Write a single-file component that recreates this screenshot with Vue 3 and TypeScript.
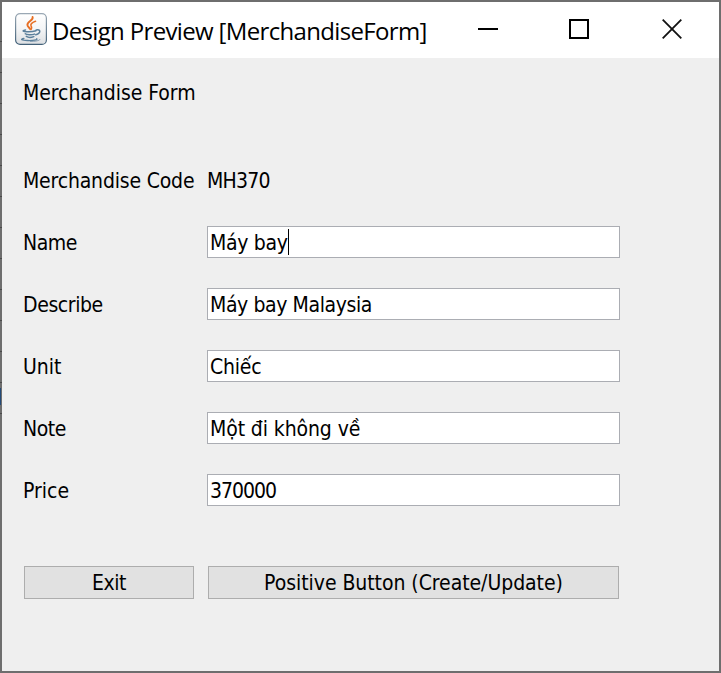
<script setup lang="ts">
import { ref } from 'vue'

interface Field {
  id: string
  label: string
  value: string
  /** Letter spacing of the label and the value, in pixels. */
  tracking: [number, number]
}

const fields = ref<Field[]>([
  { id: 'name', label: 'Name', value: 'Máy bay', tracking: [-0.45, -0.3] },
  { id: 'describe', label: 'Describe', value: 'Máy bay Malaysia', tracking: [-0.4, -0.4] },
  { id: 'unit', label: 'Unit', value: 'Chiếc', tracking: [0, -0.2] },
  { id: 'note', label: 'Note', value: 'Một đi không về', tracking: [-0.45, -0.1] },
  { id: 'price', label: 'Price', value: '370000', tracking: [0, -1] },
])
</script>

<template>
  <div class="window">
    <header class="titlebar">
      <svg class="java" width="32" height="32" viewBox="0 0 32 32">
        <defs>
          <linearGradient id="tile" x1="0" y1="0" x2="0" y2="1">
            <stop offset="0" stop-color="#fff" />
            <stop offset="0.5" stop-color="#f4f5f6" />
            <stop offset="1" stop-color="#dcdfe2" />
          </linearGradient>
          <linearGradient id="rim" x1="0" y1="0" x2="0" y2="1">
            <stop offset="0" stop-color="#9aa8b4" />
            <stop offset="1" stop-color="#426179" />
          </linearGradient>
        </defs>
        <rect x="0.6" y="0.6" width="30.8" height="30.8" rx="4.5" fill="url(#tile)" stroke="url(#rim)" stroke-width="1.2" />
        <g fill="none" stroke="#e76f24" stroke-linecap="round">
          <path d="M17.6 4c1.2 3.2-5.6 4.6-5.2 8 .2 1.8 2 2.6 2.8 4.2" stroke-width="1.9" />
          <path d="M20.5 8.3c-3 1.1-5.1 2.6-4.5 4.3.5 1.300 1.300 2 .1 3.700" stroke-width="1.6" />
        </g>
        <g fill="none" stroke="#5b7f9b" stroke-linecap="round" stroke-width="1.5">
          <path d="M10.500 17c-2.500.5-3.200 1-1.100 1.400 3.300.6 8.600.3 11.600-.6" />
          <path d="M10.300 20.700c1.200 1.200 6.500 1.200 9.200.4" />
          <path d="M11.300 23.400c1.600 1 5.400 1 7.500.2" />
          <path d="M21.200 17c4.500-1.200 5.200 3-.4 4.800" />
          <path d="M8.900 25.500c-4 .7-2.600 1.900 3.500 2 5.400.2 10.500-.4 9.300-1.700" stroke-width="1.3" />
          <path d="M15.500 28.400c4.600 0 8.500-.5 9.500-1.900" stroke-width="0.7" />
        </g>
      </svg>
      <h1 class="title">Design Preview [MerchandiseForm]</h1>
      <div class="controls">
        <svg width="20" height="20" viewBox="0 0 20 20"><path d="M0 10h20" stroke="#000" stroke-width="2" /></svg>
        <svg width="20" height="20" viewBox="0 0 20 20"><rect x="1" y="1" width="18" height="18" fill="none" stroke="#000" stroke-width="2" /></svg>
        <svg class="close" width="20" height="20" viewBox="0 0 20 20"><path d="M.7.7l18.600 18.600M19.300.7L.7 19.300" stroke="#111" stroke-width="1.8" /></svg>
      </div>
    </header>

    <main class="form">
      <div class="heading">Merchandise Form</div>
      <div class="row">
        <span class="label code">Merchandise Code</span>
        <span class="code-value">MH370</span>
      </div>
      <div v-for="f in fields" :key="f.id" class="row">
        <span class="label" :style="{ letterSpacing: f.tracking[0] + 'px' }">{{ f.label }}</span>
        <div class="input" :style="{ letterSpacing: f.tracking[1] + 'px' }">
          <span>{{ f.value }}</span><i v-if="f.id === 'name'" class="caret"></i>
        </div>
      </div>
      <div class="actions">
        <button class="exit">Exit</button>
        <button class="submit">Positive Button (Create/Update)</button>
      </div>
    </main>
  </div>
</template>

<style>
body {
  margin: 0;
  overflow: hidden;
}
</style>

<style scoped>
.window {
  box-sizing: border-box;
  width: 721px;
  height: 673px;
  padding: 2px;
  background:
    linear-gradient(#234a78, #234a78) 0 388px / 1px 17px no-repeat,
    repeating-linear-gradient(#0000 0 10px, #4a4a4a 10px 11px, #0000 11px 31px) 0 31px / 2px 383px no-repeat,
    #6e6e6e;
  color: #000;
  font-family: "DejaVu Sans Condensed", "DejaVu Sans", sans-serif;
  font-stretch: condensed;
  font-size: 21px;
  white-space: nowrap;
}
.titlebar {
  display: flex;
  align-items: center;
  box-sizing: border-box;
  height: 56px;
  padding: 0 37px 2px 13px;
  background: #fff;
}
.java {
  flex: none;
}
.title {
  margin: 3px 0 0 5px;
  font: 400 24px/32px "Open Sans", sans-serif;
  letter-spacing: -0.66px;
}
.controls {
  display: flex;
  gap: 71px;
  margin-left: auto;
}
.controls svg {
  display: block;
}
.controls .close {
  margin-left: 2px;
}
.form {
  box-sizing: border-box;
  height: 613px;
  padding: 19px 0 0 21px;
  background: #efefef;
}
.heading {
  height: 87px;
  line-height: 32px;
  letter-spacing: -0.05px;
}
.row {
  display: flex;
  align-items: center;
  height: 32px;
  line-height: 32px;
  margin-bottom: 30px;
}
.label {
  width: 184px;
  padding-top: 2px;
}
.code {
  letter-spacing: -0.18px;
}
.code-value {
  padding-top: 2px;
  letter-spacing: -0.75px;
}
.input {
  display: flex;
  align-items: center;
  box-sizing: border-box;
  width: 413px;
  height: 32px;
  padding-left: 2px;
  background: #fff;
  border: 1px solid #abadb3;
}
.input span {
  padding-top: 2px;
}
.caret {
  width: 1px;
  height: 26px;
  background: #000;
}
.actions {
  display: flex;
  gap: 14px;
  padding: 30px 0 0 1px;
}
.actions button {
  box-sizing: border-box;
  height: 33px;
  padding: 0;
  background: #e1e1e1;
  border: 1px solid #adadad;
  color: #000;
  font: inherit;
}
.actions .exit {
  width: 170px;
  letter-spacing: -0.5px;
}
.actions .submit {
  width: 411px;
  letter-spacing: -0.05px;
}
</style>
